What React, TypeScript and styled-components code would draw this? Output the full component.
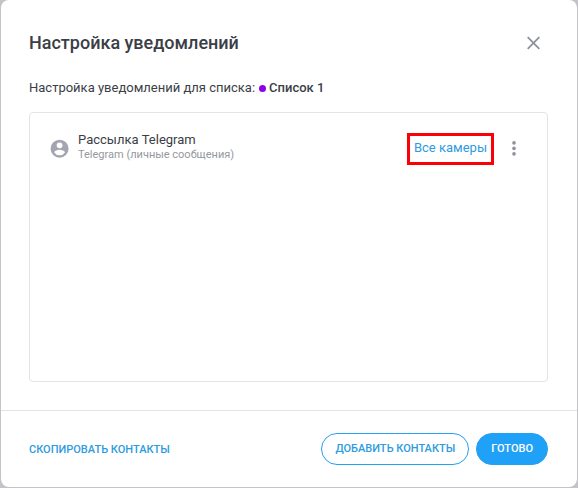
import React from "react";
import styled, { createGlobalStyle } from "styled-components";

const GlobalStyle = createGlobalStyle`
  *, *::before, *::after { box-sizing: border-box; }
  body {
    margin: 0;
    background: #c3c3c8;
    color: #3b3e46;
    font-family: Roboto, "Liberation Sans", sans-serif;
  }
  button { font-family: inherit; cursor: pointer; }
`;

const Backdrop = styled.div`
  display: flex;
  min-height: 100vh;
  padding: 0 1px 1px;
`;

const Dialog = styled.section`
  display: flex;
  flex: 1;
  flex-direction: column;
  background: #fff;
  border-radius: 8px;
`;

const Header = styled.header`
  display: flex;
  align-items: center;
  justify-content: space-between;
  padding: 31px 29px 0 28px;
`;

const Title = styled.h1`
  margin: 0;
  font-size: 18px;
  font-weight: 500;
  line-height: 24px;
`;

const IconButton = styled.button`
  display: flex;
  align-items: center;
  justify-content: center;
  width: 28px;
  height: 24px;
  padding: 0;
  border: 0;
  background: none;
  color: #8e929c;
`;

const Body = styled.main`
  display: flex;
  flex: 1;
  flex-direction: column;
  gap: 14px;
  padding: 23px 29px 28px 28px;
`;

const Caption = styled.p`
  display: flex;
  align-items: center;
  gap: 4px;
  margin: 0;
  font-size: 13px;
  line-height: 20px;
`;

const ListName = styled.strong`
  display: flex;
  align-items: center;
  gap: 3px;
  font-weight: 500;
`;

const Dot = styled.span<{ $color: string }>`
  width: 7px;
  height: 7px;
  border-radius: 50%;
  background: ${({ $color }) => $color};
`;

const ContactList = styled.ul`
  flex: 1;
  margin: 0;
  padding: 19px 20px;
  border: 1px solid #e4e4e6;
  border-radius: 4px;
  list-style: none;
`;

const ContactRow = styled.li`
  display: flex;
  align-items: center;
`;

const Avatar = styled.svg`
  flex: none;
  width: 20px;
  height: 20px;
  margin-right: 8px;
  color: #a3a6b0;
`;

const ContactText = styled.div`
  flex: 1;
  padding-bottom: 4px;
`;

const ContactName = styled.div`
  font-size: 13px;
  line-height: 16px;
`;

const ContactKind = styled.div`
  color: #9598a1;
  font-size: 11px;
  line-height: 14px;
`;

const CamerasButton = styled.button`
  height: 32px;
  padding: 0 4px 2px;
  border: 3px solid #fb0007;
  background: none;
  color: #2e9be0;
  font-size: 13px;
  line-height: 20px;
`;

const MenuButton = styled(IconButton)`
  margin-left: 6px;
  margin-right: -1px;
`;

const Footer = styled.footer`
  display: flex;
  align-items: center;
  gap: 7px;
  padding: 22px 29px 22px 28px;
  border-top: 1px solid #e4e4e6;
`;

const Action = styled.button<{ $kind: "text" | "outline" | "solid" }>`
  height: 32px;
  margin-right: ${({ $kind }) => ($kind === "text" ? "auto" : "0")};
  padding: ${({ $kind }) => ({ text: "2px 0 0", outline: "0 13px", solid: "0 14px" })[$kind]};
  border: ${({ $kind }) => ($kind === "text" ? "0" : "1px solid #24a0f5")};
  border-radius: 16px;
  background: ${({ $kind }) => ($kind === "solid" ? "#20a1f8" : "none")};
  color: ${({ $kind }) => ($kind === "solid" ? "#fff" : "#2e9be0")};
  font-size: 11px;
  font-weight: 500;
  line-height: 16px;
  text-transform: uppercase;
`;

export default function App() {
  return (
    <>
      <GlobalStyle />
      <Backdrop>
        <Dialog role="dialog" aria-labelledby="dialog-title">
          <Header>
            <Title id="dialog-title">Настройка уведомлений</Title>
            <IconButton type="button" aria-label="Закрыть">
              <svg width="14" height="14" viewBox="0 0 14 14" fill="none" stroke="currentColor" strokeWidth="1.8">
                <path d="M.7 1.200 12.300 12.800M12.300 1.200.7 12.800" />
              </svg>
            </IconButton>
          </Header>
          <Body>
            <Caption>
              Настройка уведомлений для списка:
              <ListName>
                <Dot $color="#8f00e6" />
                Список 1
              </ListName>
            </Caption>
            <ContactList>
              <ContactRow>
                <Avatar viewBox="0 0 24 24" fill="currentColor" aria-hidden="true">
                  <path d="M11.500 0.800a10.800 10.800 0 1 0 0 21.600 10.800 10.800 0 0 0 0-21.600zm0 3.300a3.500 3.500 0 1 1 0 7 3.500 3.500 0 0 1 0-7zm0 15.400a7.600 7.600 0 0 1-6.400-3.400c.1-2.100 4.300-3.200 6.400-3.200s6.300 1.100 6.400 3.200a7.600 7.600 0 0 1-6.400 3.400z" />
                </Avatar>
                <ContactText>
                  <ContactName>Рассылка Telegram</ContactName>
                  <ContactKind>Telegram (личные сообщения)</ContactKind>
                </ContactText>
                <CamerasButton type="button">Все камеры</CamerasButton>
                <MenuButton type="button" aria-label="Меню контакта">
                  <svg width="4" height="16" viewBox="0 0 4 16" fill="currentColor">
                    <circle cx="2" cy="1.900" r="1.800" />
                    <circle cx="2" cy="7.400" r="1.800" />
                    <circle cx="2" cy="12.900" r="1.800" />
                  </svg>
                </MenuButton>
              </ContactRow>
            </ContactList>
          </Body>
          <Footer>
            <Action type="button" $kind="text">Скопировать контакты</Action>
            <Action type="button" $kind="outline">Добавить контакты</Action>
            <Action type="button" $kind="solid">Готово</Action>
          </Footer>
        </Dialog>
      </Backdrop>
    </>
  );
}
